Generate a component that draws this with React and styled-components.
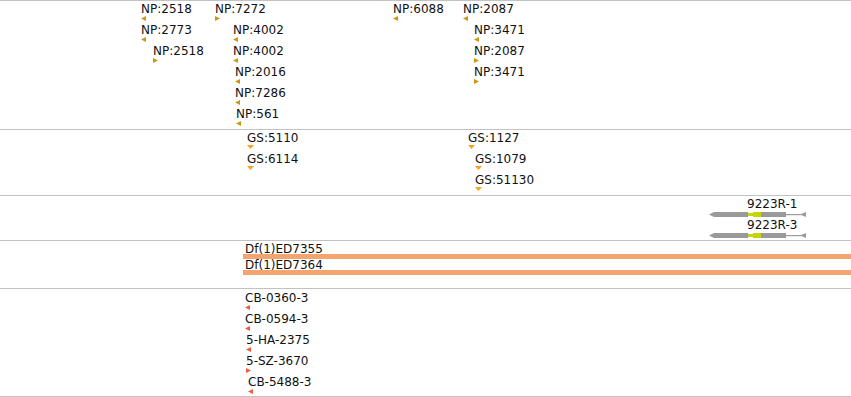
import React from 'react'
import styled, { createGlobalStyle } from 'styled-components'

const ROW = 21

const npFeatures = [
  { name: 'NP:2518', x: 141, row: 0, strand: '-' },
  { name: 'NP:2773', x: 141, row: 1, strand: '-' },
  { name: 'NP:2518', x: 153, row: 2, strand: '+' },
  { name: 'NP:7272', x: 215, row: 0, strand: '+' },
  { name: 'NP:4002', x: 233, row: 1, strand: '-' },
  { name: 'NP:4002', x: 233, row: 2, strand: '-' },
  { name: 'NP:2016', x: 235, row: 3, strand: '-' },
  { name: 'NP:7286', x: 235, row: 4, strand: '-' },
  { name: 'NP:561', x: 236, row: 5, strand: '-' },
  { name: 'NP:6088', x: 393, row: 0, strand: '-' },
  { name: 'NP:2087', x: 463, row: 0, strand: '-' },
  { name: 'NP:3471', x: 474, row: 1, strand: '-' },
  { name: 'NP:2087', x: 474, row: 2, strand: '+' },
  { name: 'NP:3471', x: 474, row: 3, strand: '+' },
]

const gsFeatures = [
  { name: 'GS:5110', x: 247, row: 0 },
  { name: 'GS:6114', x: 247, row: 1 },
  { name: 'GS:1127', x: 468, row: 0 },
  { name: 'GS:1079', x: 475, row: 1 },
  { name: 'GS:51130', x: 475, row: 2 },
]

const genes = [
  { name: '9223R-1', x: 709, row: 0 },
  { name: '9223R-3', x: 709, row: 1 },
]

const deficiencies = [
  { name: 'Df(1)ED7355', x: 243, row: 0 },
  { name: 'Df(1)ED7364', x: 243, row: 1 },
]

const cbFeatures = [
  { name: 'CB-0360-3', x: 245, row: 0, strand: '-' },
  { name: 'CB-0594-3', x: 245, row: 1, strand: '-' },
  { name: '5-HA-2375', x: 246, row: 2, strand: '-' },
  { name: '5-SZ-3670', x: 246, row: 3, strand: '+' },
  { name: 'CB-5488-3', x: 248, row: 4, strand: '-' },
]

const Arrow = ({ strand, color }) => (
  <svg width="6" height="5" viewBox="0 0 6 5">
    {strand === '-'
      ? <polygon points="0,2.5 5,0 5,5" fill={color} />
      : <polygon points="0,0 5,2.5 0,5" fill={color} />}
  </svg>
)

const DownArrow = ({ color }) => (
  <svg width="7" height="4" viewBox="0 0 7 4">
    <polygon points="0,0 7,0 3.5,4" fill={color} />
  </svg>
)

const GeneModel = () => (
  <svg width="98" height="7" viewBox="0 0 98 7">
    <polygon points="0,3.5 5,1 39,1 39,6 5,6" fill="#9a9a9a" />
    <rect x="39" y="2" width="5" height="3" fill="#c6d600" />
    <rect x="44" y="1" width="8" height="5" fill="#c6d600" />
    <rect x="52" y="1" width="25" height="5" fill="#9a9a9a" />
    <rect x="77" y="3" width="15" height="1.2" fill="#9a9a9a" />
    <polygon points="91,3.5 97,1 97,6" fill="#9a9a9a" />
  </svg>
)

export default function App() {
  return (
    <>
      <GlobalStyle />
      <Browser>
        <Track $height={129}>
          {npFeatures.map((f, i) => (
            <Feature key={i} $x={f.x} $top={1 + f.row * ROW}>
              <Label>{f.name}</Label>
              <Glyph><Arrow strand={f.strand} color="#cc960f" /></Glyph>
            </Feature>
          ))}
        </Track>
        <Track $height={66}>
          {gsFeatures.map((f, i) => (
            <Feature key={i} $x={f.x} $top={1 + f.row * ROW}>
              <Label>{f.name}</Label>
              <Glyph><DownArrow color="#f4a423" /></Glyph>
            </Feature>
          ))}
        </Track>
        <Track $height={45}>
          {genes.map((g, i) => (
            <Feature key={i} $x={g.x} $top={1 + g.row * ROW}>
              <GeneLabel>{g.name}</GeneLabel>
              <Glyph><GeneModel /></Glyph>
            </Feature>
          ))}
        </Track>
        <Track $height={48}>
          {deficiencies.map((d, i) => (
            <SpanFeature key={i} $x={d.x} $top={3 + d.row * 16}>
              <SpanLabel>{d.name}</SpanLabel>
              <SpanBar />
            </SpanFeature>
          ))}
        </Track>
        <Track $height={109} $last>
          {cbFeatures.map((f, i) => (
            <Feature key={i} $x={f.x} $top={2 + f.row * ROW}>
              <Label>{f.name}</Label>
              <Glyph><Arrow strand={f.strand} color="#f25c3a" /></Glyph>
            </Feature>
          ))}
        </Track>
      </Browser>
    </>
  )
}

const GlobalStyle = createGlobalStyle`
  body {
    margin: 0;
    background: #ffffff;
    font-family: 'DejaVu Sans', 'Liberation Sans', sans-serif;
  }
`;

const Browser = styled.div`
  width: 851px;
  display: flex;
  flex-direction: column;
`;

const Track = styled.div`
  position: relative;
  box-sizing: border-box;
  height: ${p => p.$height}px;
  border-top: 1px solid #c2c2c2;
  border-bottom: ${p => (p.$last ? '1px solid #c2c2c2' : 'none')};
  overflow: hidden;
`;

const Feature = styled.div`
  position: absolute;
  left: ${p => p.$x}px;
  top: ${p => p.$top}px;
  display: flex;
  flex-direction: column;
  align-items: flex-start;
`;

const Label = styled.span`
  font-size: 12px;
  line-height: 14px;
  color: #111111;
  white-space: nowrap;
`;

const GeneLabel = styled(Label)`
  padding-left: 38px;
`;

const Glyph = styled.div`
  display: flex;
  line-height: 0;
`;

const SpanFeature = styled.div`
  position: absolute;
  left: ${p => p.$x}px;
  right: 0;
  top: ${p => p.$top}px;
  display: flex;
  flex-direction: column;
`;

const SpanLabel = styled.span`
  font-size: 12px;
  line-height: 10px;
  padding-left: 2px;
  color: #111111;
  white-space: nowrap;
`;

const SpanBar = styled.div`
  height: 5px;
  background: #f4a46e;
`;
